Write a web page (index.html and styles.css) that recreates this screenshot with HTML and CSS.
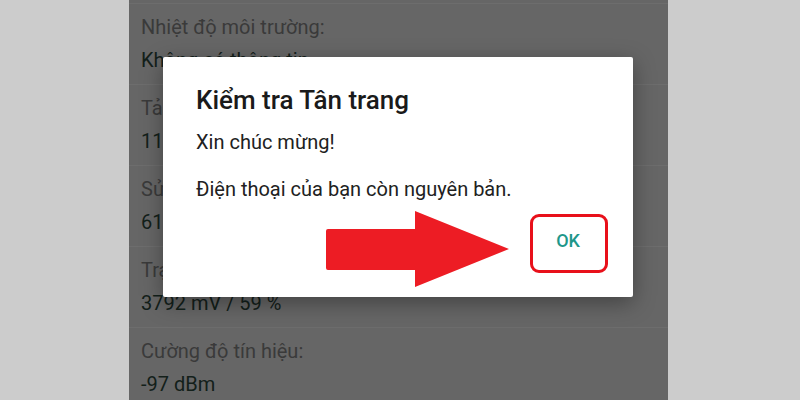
FILE: index.html
```
<!DOCTYPE html>
<html lang="vi">
<head>
<meta charset="utf-8">
<title>Kiểm tra Tân trang</title>
<link rel="stylesheet" href="styles.css">
</head>
<body>
<div class="page">
  <div class="screen">
    <ul class="list">
      <li class="item"><span class="label">Nhiệt độ môi trường:</span><span class="value">Không có thông tin</span></li>
      <li class="item"><span class="label">Tải CPU:</span><span class="value">11 %</span></li>
      <li class="item"><span class="label">Sử dụng bộ nhớ:</span><span class="value">61 %</span></li>
      <li class="item"><span class="label">Trạng thái pin:</span><span class="value">3792 mV / 59 %</span></li>
      <li class="item"><span class="label">Cường độ tín hiệu:</span><span class="value">-97 dBm</span></li>
    </ul>
    <div class="dialog">
      <h1 class="title">Kiểm tra Tân trang</h1>
      <p class="msg">Xin chúc mừng!</p>
      <p class="msg msg-2">Điện thoại của bạn còn nguyên bản.</p>
      <div class="actions"><span class="ok">OK</span></div>
    </div>
  </div>
  <svg class="arrow" width="800" height="400" viewBox="0 0 800 400" aria-hidden="true">
    <path d="M328 229 L415 229 L415 211 L509 249 L415 287 L415 270 L328 270 Q326 270 326 268 L326 231 Q326 229 328 229 Z" fill="#ed1c24"/>
  </svg>
  <div class="ring"></div>
</div>
</body>
</html>
```
FILE: styles.css
```
html, body {
  margin: 0;
  padding: 0;
}
body {
  background: #cccccc;
  font-family: Roboto, "Noto Sans", "DejaVu Sans", sans-serif;
}
.page {
  position: relative;
  width: 800px;
  height: 400px;
  overflow: hidden;
}
.screen {
  position: relative;
  margin-left: 129px;
  width: 539px;
  height: 400px;
  background: #666666;
  overflow: hidden;
  padding-top: 3px;
  box-sizing: border-box;
}
.list {
  list-style: none;
  margin: 0;
  padding: 0;
}
.item {
  display: flex;
  flex-direction: column;
  border-top: 1px solid #6d6d6d;
  padding: 7px 12px;
  font-size: 20px;
  line-height: 33px;
}
.label {
  color: #3a3a3a;
}
.value {
  color: #13201a;
}
.dialog {
  position: absolute;
  left: 34px;
  top: 57px;
  width: 470px;
  height: 240px;
  box-sizing: border-box;
  background: #ffffff;
  border-radius: 2px;
  box-shadow: 0 6px 22px rgba(0, 0, 0, 0.35);
  padding: 28px 0 38px 33px;
  display: flex;
  flex-direction: column;
}
.title {
  margin: 0;
  font-size: 26px;
  line-height: 30px;
  font-weight: 500;
  color: #1a1a1a;
}
.msg {
  margin: 15px 0 0;
  font-size: 20px;
  line-height: 24px;
  color: #212121;
}
.msg-2 {
  margin-top: 23px;
}
.actions {
  margin-top: auto;
  display: flex;
  justify-content: flex-end;
  padding-right: 53px;
}
.ok {
  font-size: 18px;
  line-height: 36px;
  font-weight: 500;
  color: #1e978a;
}
.arrow {
  position: absolute;
  left: 0;
  top: 0;
}
.ring {
  position: absolute;
  left: 530px;
  top: 214px;
  width: 78px;
  height: 59px;
  box-sizing: border-box;
  border: 3px solid #e8101a;
  border-radius: 9px;
}
```
